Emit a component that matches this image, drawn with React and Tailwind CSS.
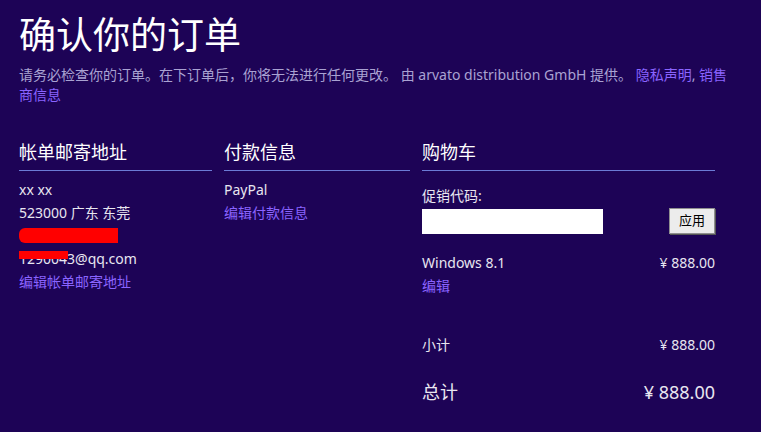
const cjk = { fontFamily: '"Noto Sans", "Noto Sans CJK SC", sans-serif' };

function Heading({ children }) {
  return (
    <div>
      <h2 className="text-[18px] leading-[24px] text-white">{children}</h2>
      <div className="mt-[6px] h-px bg-[#6b7bd6]" />
    </div>
  );
}

function App() {
  return (
    <div className="w-[761px] h-[432px] overflow-hidden bg-[#1d0356] text-[#e8e6f0]" style={cjk}>
      <div className="pl-[19px] pt-[11px]">
        <h1 className="text-[37px] leading-[48px] text-white">确认你的订单</h1>
        <p className="mt-[6px] w-[712px] text-[14px] leading-[20px] text-[#a9a2d2]">
          请务必检查你的订单。在下订单后，你将无法进行任何更改。 由 arvato distribution GmbH 提供。{' '}
          <a className="text-[#8a64ff]">隐私声明</a>, <a className="text-[#8a64ff]">销售商信息</a>
        </p>

        <div className="mt-[35px] grid w-[696px] grid-cols-[193px_186px_293px] gap-x-3 text-[14px]">
          <div>
            <Heading>帐单邮寄地址</Heading>
            <div className="mt-[7px] leading-[23px]">
              <p>xx xx</p>
              <p>523000 广东 东莞</p>
              <div className="relative h-[23px]">
                <div className="absolute left-0 top-[4px] h-[15px] w-[99px] rounded-l-[6px] bg-[#ff0000]" />
              </div>
              <div className="relative">
                <p>1290043@qq.com</p>
                <div className="absolute left-0 top-[4px] h-[8px] w-[49px] bg-[#ff0000]" />
              </div>
              <a className="text-[#8a64ff]">编辑帐单邮寄地址</a>
            </div>
          </div>

          <div>
            <Heading>付款信息</Heading>
            <div className="mt-[7px] leading-[23px]">
              <p>PayPal</p>
              <a className="text-[#8a64ff]">编辑付款信息</a>
            </div>
          </div>

          <div>
            <Heading>购物车</Heading>
            <p className="mt-[15px] leading-[20px]">促销代码:</p>
            <div className="mt-[2px] flex items-start justify-between">
              <input className="mt-[1px] h-[25px] w-[181px] bg-white outline-none" />
              <button className="h-[26px] w-[46px] border border-[#8f8f8f] bg-[#ececec] text-[13px] text-black shadow-[1px_1px_0_#555]">
                应用
              </button>
            </div>
            <div className="mt-[17px] flex justify-between leading-[23px]">
              <span>Windows 8.1</span>
              <span>¥ 888.00</span>
            </div>
            <a className="block leading-[23px] text-[#8a64ff]">编辑</a>
            <div className="mt-[36px] flex justify-between leading-[23px]">
              <span>小计</span>
              <span>¥ 888.00</span>
            </div>
            <div className="mt-[23px] flex justify-between text-[18px] leading-[26px]">
              <span>总计</span>
              <span>¥ 888.00</span>
            </div>
          </div>
        </div>
      </div>
    </div>
  );
}

export default App;
